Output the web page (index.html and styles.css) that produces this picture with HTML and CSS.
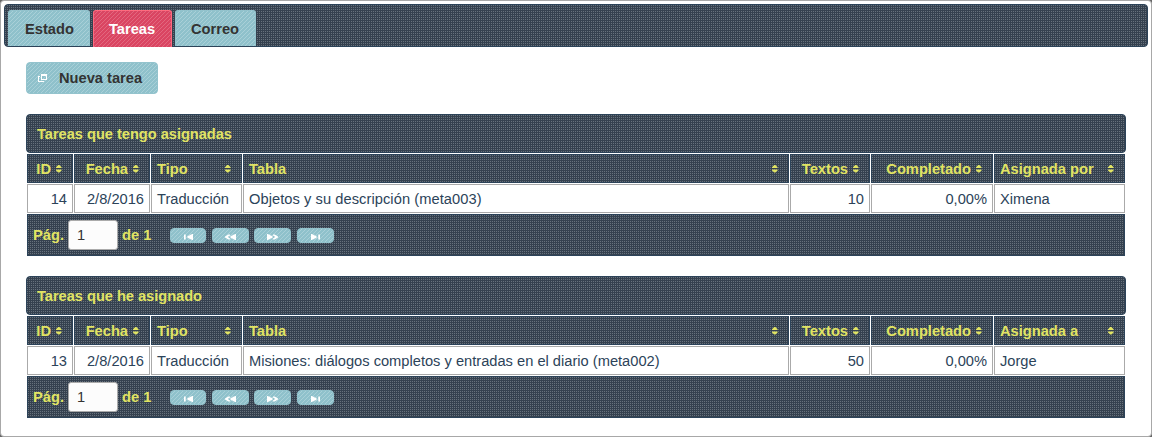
FILE: index.html
```
<!DOCTYPE html>
<html lang="es">
<head>
<meta charset="utf-8">
<title>Tareas</title>
<link rel="stylesheet" href="styles.css">
</head>
<body>
<svg width="0" height="0" class="defs">
  <symbol id="sort" viewBox="0 0 6 8"><path d="M2.2 0h1.2L5.6 2.2V3H0v-.8zM0 4.6h5.6v.8L3.4 7.6H2.2L0 5.4z"/></symbol>
  <symbol id="first" viewBox="0 0 9 6"><path d="M0 .5h1.7v5H0zM9 0v6H7.5V5.2H5.5V4.2H3.5V1.8h2V.8h2V0z"/></symbol>
  <symbol id="prev" viewBox="0 0 11 6"><path d="M11 0v6H9.5V5.2H7.5V4.2H5.5V1.8h2V.8h2V0zM5 .5v1L2.7 3 5 4.5v1H3.3L0 3.4v-.8L3.3.5z"/></symbol>
</svg>
<main class="page">
  <nav class="tabs">
    <a class="tab estado">Estado</a>
    <a class="tab active">Tareas</a>
    <a class="tab correo">Correo</a>
  </nav>
  <div class="content">
    <button class="new-task"><svg width="9" height="8" viewBox="0 0 9 8"><path d="M3 0h6v6H3zM4 2v3h4V2zM0 2h2v1H1v4h4V7h1v1H0z" fill-rule="evenodd"/></svg>Nueva tarea</button>

    <section class="table">
      <h2 class="caption">Tareas que tengo asignadas</h2>
      <div class="grid">
        <div class="th num">ID<svg class="sort"><use href="#sort"/></svg></div>
        <div class="th num">Fecha<svg class="sort"><use href="#sort"/></svg></div>
        <div class="th">Tipo<svg class="sort"><use href="#sort"/></svg></div>
        <div class="th">Tabla<svg class="sort"><use href="#sort"/></svg></div>
        <div class="th num">Textos<svg class="sort"><use href="#sort"/></svg></div>
        <div class="th num">Completado<svg class="sort"><use href="#sort"/></svg></div>
        <div class="th">Asignada por<svg class="sort"><use href="#sort"/></svg></div>
        <div class="td num">14</div><div class="td num">2/8/2016</div><div class="td">Traducción</div><div class="td wide">Objetos y su descripción (meta003)</div><div class="td num">10</div><div class="td num">0,00%</div><div class="td">Ximena</div>
      </div>
      <div class="pager">
        <span class="label">Pág.</span><input class="page-no" value="1"><span class="total">de 1</span>
        <span class="btn b1"><svg class="i9"><use href="#first"/></svg></span><span class="btn b2"><svg class="i11"><use href="#prev"/></svg></span><span class="btn b3"><svg class="i11 flip"><use href="#prev"/></svg></span><span class="btn b4"><svg class="i9 flip"><use href="#first"/></svg></span>
      </div>
    </section>

    <section class="table">
      <h2 class="caption">Tareas que he asignado</h2>
      <div class="grid">
        <div class="th num">ID<svg class="sort"><use href="#sort"/></svg></div>
        <div class="th num">Fecha<svg class="sort"><use href="#sort"/></svg></div>
        <div class="th">Tipo<svg class="sort"><use href="#sort"/></svg></div>
        <div class="th">Tabla<svg class="sort"><use href="#sort"/></svg></div>
        <div class="th num">Textos<svg class="sort"><use href="#sort"/></svg></div>
        <div class="th num">Completado<svg class="sort"><use href="#sort"/></svg></div>
        <div class="th">Asignada a<svg class="sort"><use href="#sort"/></svg></div>
        <div class="td num">13</div><div class="td num">2/8/2016</div><div class="td">Traducción</div><div class="td">Misiones: diálogos completos y entradas en el diario (meta002)</div><div class="td num">50</div><div class="td num">0,00%</div><div class="td">Jorge</div>
      </div>
      <div class="pager">
        <span class="label">Pág.</span><input class="page-no" value="1"><span class="total">de 1</span>
        <span class="btn b1"><svg class="i9"><use href="#first"/></svg></span><span class="btn b2"><svg class="i11"><use href="#prev"/></svg></span><span class="btn b3"><svg class="i11 flip"><use href="#prev"/></svg></span><span class="btn b4"><svg class="i9 flip"><use href="#first"/></svg></span>
      </div>
    </section>
  </div>
</main>
</body>
</html>
```
FILE: styles.css
```
* { box-sizing: border-box; }
body { margin: 0; background: #666; font: 14.667px/18px "Liberation Sans", Arial, sans-serif; color: #2c4359; }
.defs { display: block; height: 0; }
.page { height: 437px; border: 1px solid #a8a8a8; border-radius: 4px; background: #fff; padding: 3px; overflow: hidden; }

.tabs, .caption, .th, .pager {
  background-color: #35414f;
  background-image: conic-gradient(from 0deg at 1px 1px, transparent 75%, #66717c 0);
  background-size: 2px 2px;
  border: 1px solid #2c4359;
}
.tab, .new-task, .btn {
  background-color: #8fc1cb;
  background-image: linear-gradient(135deg, transparent 44%, #a9d0d8 44%, #a9d0d8 56%, transparent 56%);
  background-size: 4px 4px;
  border: 1px solid #93c3cd;
  color: #333;
  font-weight: bold;
}
.tabs { display: flex; gap: 3px; height: 43px; border-radius: 4px; padding: 5px 0 0 3px; }
.tab { height: 36px; border-bottom: 0; border-radius: 3px 3px 0 0; padding-left: 16px; line-height: 36px; }
.estado { width: 82px; }
.correo { width: 81px; padding-left: 15px; }
.tab.active {
  width: 79px; height: 37px; padding-left: 15px; color: #fff; background-color: #da4562; border-color: #ff6b7f;
  background-image: linear-gradient(135deg, transparent 44%, #e2687f 44%, #e2687f 56%, transparent 56%);
}
.content { padding: 15px 22px 0; }
.new-task { display: flex; align-items: center; gap: 12px; width: 132px; height: 32px; border-radius: 4px; padding: 0 0 0 11px; font: bold 14.667px/18px "Liberation Sans", Arial, sans-serif; }
.new-task svg { fill: #fff; }

.table { margin-top: 20px; height: 142px; }
.caption { margin: 0; height: 39px; border-radius: 4px; padding: 0 10px; font: bold 14.667px/38px "Liberation Sans", Arial, sans-serif; letter-spacing: -.04px; color: #e1e463; }
.grid { display: grid; grid-template-columns: 46px 76px 91px 546px 80px 122px 131px; grid-template-rows: 29px 29px; gap: 1px; margin: 1px 1px; }
.th { display: flex; align-items: center; justify-content: space-between; padding: 0 10px 0 5px; color: #e1e463; font-weight: bold; white-space: nowrap; }
.th.num { justify-content: flex-end; gap: 5px; padding-left: 0; }
.sort { width: 6px; height: 8px; fill: #e1e463; flex: none; }
.td { border: 1px solid #aaa; padding: 0 5px; line-height: 28px; white-space: nowrap; background: #fff; }
.td.num { text-align: right; }
.td.wide { letter-spacing: .06px; }
.pager { display: flex; align-items: center; height: 42px; margin: 0 1px; padding-left: 5px; color: #e1e463; font-weight: bold; }
.label { width: 35px; }
.page-no { width: 50px; height: 30px; border: 1px solid #aaa; border-radius: 3px; background: #fcfcfc; color: #333; padding: 0 8px; font: 14.667px "Liberation Sans", Arial, sans-serif; }
.total { width: 48px; margin-left: 4px; }
.btn { display: flex; align-items: center; justify-content: center; width: 37px; height: 15px; border-radius: 4px; margin: 1px 0 0; padding-top: 3px; }
.b1 { width: 36px; }
.b2 { margin-left: 6px; }
.b3 { margin-left: 5px; }
.b4 { margin-left: 6px; }
.btn svg { fill: #fff; height: 6px; }
.i9 { width: 9px; }
.i11 { width: 11px; }
.flip { transform: scaleX(-1); }
```
